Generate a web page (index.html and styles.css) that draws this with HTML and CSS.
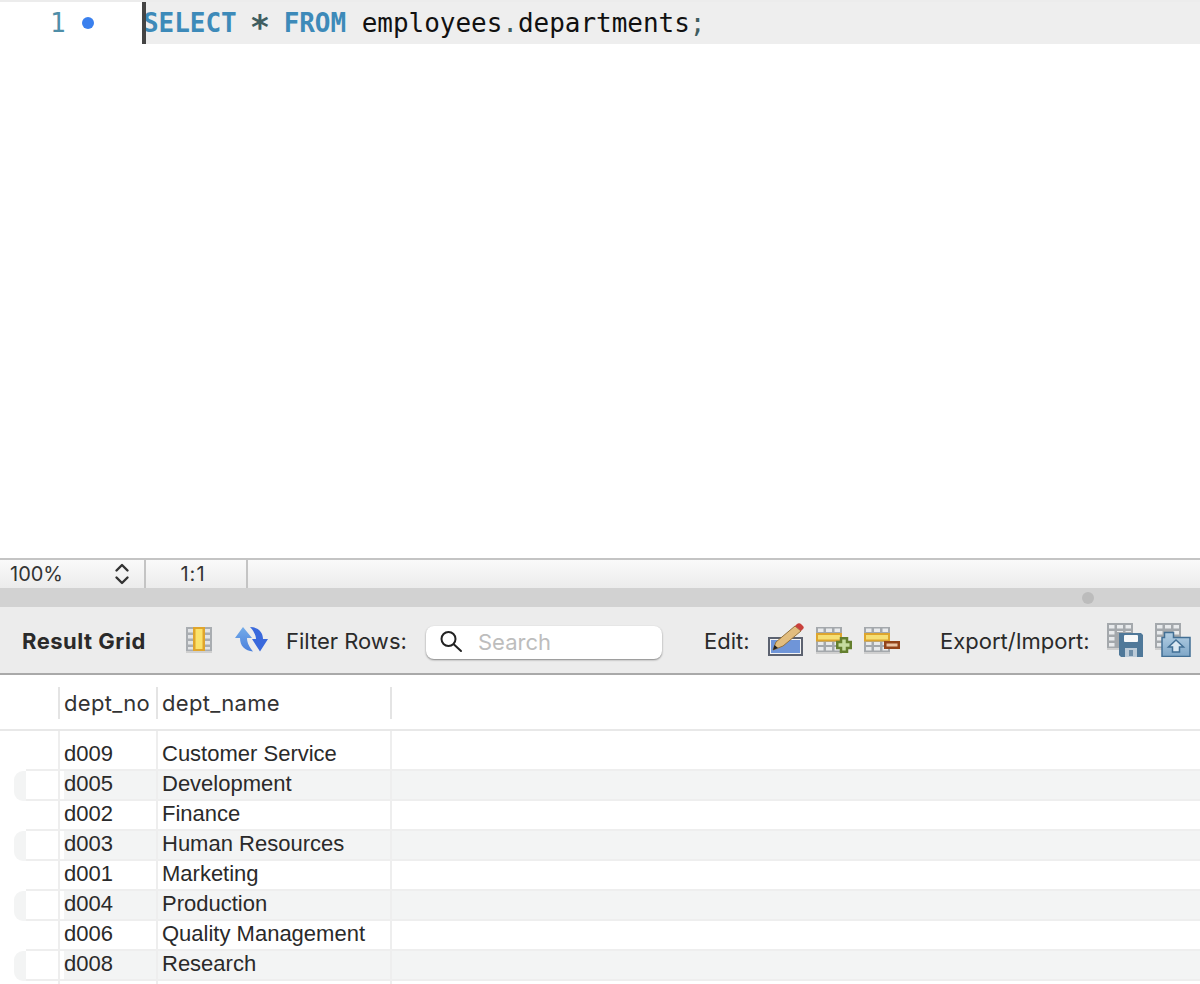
FILE: index.html
```html
<!DOCTYPE html>
<html lang="en">
<head>
    <meta charset="UTF-8">
    <title>Result Grid</title>
    <link rel="stylesheet" href="styles.css">
</head>
<body>
    <div class="editor">
        <div class="code-line">
            <div class="gutter">
                <span class="line-number">1</span>
                <span class="line-dot"></span>
            </div>
            <div class="active-line">
                <code class="code"><span class="kw">SELECT</span> <span class="op star">*</span> <span class="kw">FROM</span> employees<span class="op">.</span>departments<span class="op">;</span></code>
            </div>
        </div>
    </div>

    <div class="status-bar">
        <div class="zoom-cell">
            <span>100%</span>
            <svg class="stepper" width="16" height="24" viewBox="0 0 16 24" fill="none" stroke="#333" stroke-width="2.4" stroke-linecap="round" stroke-linejoin="round">
                <path d="M2.500 8.500 8 3l5.500 5.500"/>
                <path d="M2.500 15.500 8 21l5.500-5.500"/>
            </svg>
        </div>
        <div class="pos-cell">1:1</div>
    </div>

    <div class="splitter"><span class="splitter-dot"></span></div>

    <div class="toolbar">
        <span class="grid-title">Result Grid</span>

        <svg class="icon icon-columns" width="28" height="28" viewBox="0 0 28 28">
            <rect x="0" y="1" width="26" height="24" fill="#a9adb1"/>
            <path d="M2 3h5v3.500H2zM2 9h5v3.500H2zM2 15h5v3.500H2zM2 21h5v2.500H2zM19 3h5v3.500h-5zM19 9h5v3.500h-5zM19 15h5v3.500h-5zM19 21h5v2.500h-5z" fill="#e2e4e6"/>
            <rect x="7" y="1" width="12" height="24" fill="#e0a52c"/>
            <rect x="9.500" y="3" width="7" height="20" fill="#fbe26b"/>
            <rect x="0" y="25" width="26" height="2" fill="#cfcfcf"/>
        </svg>

        <svg class="icon icon-refresh" width="34" height="28" viewBox="0 0 34 28">
            <defs>
                <linearGradient id="arrowLight" x1="0" y1="0" x2="0" y2="1">
                    <stop offset="0" stop-color="#74ace9"/>
                    <stop offset="1" stop-color="#4a80dc"/>
                </linearGradient>
            </defs>
            <path d="M8 1 0 12h5c0 8 5 13 13 13.500-3-4-6-8-6-13.500h5z" fill="url(#arrowLight)"/>
            <path d="M25 25.500 33 13h-5c0-7-5-12-13-12 3 3 6 8 6 12h-4z" fill="#3a69dc"/>
        </svg>

        <span class="label label-filter">Filter Rows:</span>

        <div class="search-box">
            <svg width="24" height="24" viewBox="0 0 24 24" fill="none" stroke="#222" stroke-width="2" stroke-linecap="round">
                <circle cx="8.500" cy="9" r="7"/>
                <path d="m14 14.500 7 6.500"/>
            </svg>
            <span class="search-text">Search</span>
        </div>

        <span class="label label-edit">Edit:</span>

        <svg class="icon icon-edit" width="38" height="34" viewBox="0 0 38 34">
            <rect x="1" y="15" width="33" height="17" fill="#6f95d8" stroke="#5c6270" stroke-width="2"/>
            <rect x="2.500" y="16.500" width="30" height="14" fill="none" stroke="#f4f4f4"/>
            <path d="M5 27l3-8L27 3l6 5-18 15z" fill="#e2bd7e" stroke="#94733f"/>
            <path d="M5 27l1.500-5 3.500 3z" fill="#222"/>
            <path d="M27 3l2-2c1-1 3-1 4 0l2 2c1 1 1 2 0 3l-2 2z" fill="#c9403c"/>
        </svg>

        <svg class="icon icon-add" width="36" height="30" viewBox="0 0 36 30">
            <rect x="0" y="2" width="26" height="25" fill="#a4a8ac"/>
            <path d="M2 3.500h5.500V7H2zM10 3.500h6V7h-6zM18.500 3.500H24V7h-5.500zM2 17h5.500v3H2zM10 17h6v3h-6zM18.500 17H24v3h-5.500zM2 22h5.500v3.500H2zM10 22h6v3.500h-6zM18.500 22H24v3.500h-5.500z" fill="#e8eaec"/>
            <rect x="1" y="9" width="24" height="6.500" fill="#f6df74" stroke="#dda52e" stroke-width="2"/>
            <rect x="0" y="27" width="26" height="2" fill="#cfcfcf"/>
            <path d="M25 13.250h6V17h3.750v6H31v3.750h-6V23h-3.750v-6H25z" fill="#c5dc9e" stroke="#647f2e" stroke-width="2.500"/>
        </svg>

        <svg class="icon icon-del" width="36" height="30" viewBox="0 0 36 30">
            <rect x="0" y="2" width="26" height="25" fill="#a4a8ac"/>
            <path d="M2 3.500h5.500V7H2zM10 3.500h6V7h-6zM18.500 3.500H24V7h-5.500zM2 17h5.500v3H2zM10 17h6v3h-6zM18.500 17H24v3h-5.500zM2 22h5.500v3.500H2zM10 22h6v3.500h-6zM18.500 22H24v3.500h-5.500z" fill="#e8eaec"/>
            <rect x="1" y="9" width="24" height="6.500" fill="#f6df74" stroke="#dda52e" stroke-width="2"/>
            <rect x="0" y="27" width="26" height="2" fill="#cfcfcf"/>
            <rect x="21.250" y="17.250" width="13.500" height="5.500" fill="#eac4a4" stroke="#93431a" stroke-width="2.500"/>
        </svg>

        <span class="label label-export">Export/Import:</span>

        <svg class="icon icon-export" width="36" height="34" viewBox="0 0 36 34">
            <rect x="0" y="0" width="26" height="25" fill="#a4a8ac"/>
            <path d="M2 2h5.500v3.500H2zM10 2h6v3.500h-6zM18.500 2H24v3.500h-5.500zM2 8h5.500v3.500H2zM10 8h6v1h-6zM18.500 8H24v1h-5.500zM2 14h5.500v3.500H2zM2 20h5.500v3.500H2z" fill="#e8eaec"/>
            <rect x="0" y="25" width="12" height="2" fill="#cfcfcf"/>
            <path d="M12 10h22l2 2v22H14l-2-2z" fill="#4f7899"/>
            <rect x="17" y="12" width="14" height="7" rx="1" fill="#f7f8f9"/>
            <rect x="18" y="25" width="12" height="9" fill="#bccbd8"/>
            <rect x="22" y="27" width="4" height="6" fill="#6f8ea8"/>
        </svg>

        <svg class="icon icon-import" width="36" height="34" viewBox="0 0 36 34">
            <defs>
                <linearGradient id="folderFill" x1="0" y1="0" x2="0" y2="1">
                    <stop offset="0" stop-color="#b4cfe4"/>
                    <stop offset="1" stop-color="#7ea6c7"/>
                </linearGradient>
            </defs>
            <rect x="0" y="0" width="26" height="25" fill="#a4a8ac"/>
            <path d="M2 2h5.500v3.500H2zM10 2h6v3.500h-6zM18.500 2H24v3.500h-5.500zM2 8h5.500v3.500H2zM18.500 8H24v3.500h-5.500zM2 14h5.500v3.500H2zM2 20h5v3.500H2z" fill="#e8eaec"/>
            <rect x="0" y="25" width="7" height="2" fill="#cfcfcf"/>
            <path d="M9.500 14.500v-5h9v5h16.500v19h-28v-19z" fill="url(#folderFill)" stroke="#426f95" stroke-width="1.500"/>
            <path d="M21 17l7.500 7h-4v5h-7v-5h-4z" fill="#dbe8f2" stroke="#426f95" stroke-width="1.500"/>
        </svg>
    </div>

    <div class="grid">
        <div class="grid-head">
            <div class="head-cell head-no">dept_no</div>
            <div class="head-cell head-name">dept_name</div>
        </div>
        <div class="grid-body">
            <div class="row first">
                <span class="row-cap"></span><span class="row-pad"></span>
                <span class="cell cell-no">d009</span><span class="cell cell-name">Customer Service</span><span class="cell cell-rest"></span>
            </div>
            <div class="row alt">
                <span class="row-cap"></span><span class="row-pad"></span>
                <span class="cell cell-no">d005</span><span class="cell cell-name">Development</span><span class="cell cell-rest"></span>
            </div>
            <div class="row">
                <span class="row-cap"></span><span class="row-pad"></span>
                <span class="cell cell-no">d002</span><span class="cell cell-name">Finance</span><span class="cell cell-rest"></span>
            </div>
            <div class="row alt">
                <span class="row-cap"></span><span class="row-pad"></span>
                <span class="cell cell-no">d003</span><span class="cell cell-name">Human Resources</span><span class="cell cell-rest"></span>
            </div>
            <div class="row">
                <span class="row-cap"></span><span class="row-pad"></span>
                <span class="cell cell-no">d001</span><span class="cell cell-name">Marketing</span><span class="cell cell-rest"></span>
            </div>
            <div class="row alt">
                <span class="row-cap"></span><span class="row-pad"></span>
                <span class="cell cell-no">d004</span><span class="cell cell-name">Production</span><span class="cell cell-rest"></span>
            </div>
            <div class="row">
                <span class="row-cap"></span><span class="row-pad"></span>
                <span class="cell cell-no">d006</span><span class="cell cell-name">Quality Management</span><span class="cell cell-rest"></span>
            </div>
            <div class="row alt">
                <span class="row-cap"></span><span class="row-pad"></span>
                <span class="cell cell-no">d008</span><span class="cell cell-name">Research</span><span class="cell cell-rest"></span>
            </div>
            <div class="row">
                <span class="row-cap"></span><span class="row-pad"></span>
                <span class="cell cell-no"></span><span class="cell cell-name"></span><span class="cell cell-rest"></span>
            </div>
        </div>
    </div>
</body>
</html>
```

FILE: styles.css
```css
html, body {
    height: 984px;
    overflow: hidden;
}
body {
    margin: 0;
    background-color: white;
    font-family: 'Inter', 'Liberation Sans', sans-serif;
    color: #222;
}

/* query editor */
.editor {
    height: 556px;
    border-top: 2px solid #ececec;
}
.code-line {
    display: flex;
    height: 42px;
}
.gutter {
    width: 142px;
    display: flex;
    align-items: center;
    flex-shrink: 0;
}
.line-number {
    font-family: 'DejaVu Sans Mono', monospace;
    font-size: 26px;
    color: #4f8ea8;
    margin-left: 50px;
}
.line-dot {
    width: 12px;
    height: 12px;
    border-radius: 50%;
    background-color: #3a80ee;
    margin-left: 16px;
}
.active-line {
    flex: 1;
    position: relative;
    background-color: #eeeeee;
    line-height: 42px;
}
.active-line::before {
    content: '';
    position: absolute;
    top: 0;
    left: 0;
    width: 4px;
    height: 42px;
    background-color: #444;
}
.code {
    font-family: 'DejaVu Sans Mono', monospace;
    font-size: 26px;
    letter-spacing: -0.03px;
    color: #111;
    margin-left: 1px;
}
.kw {
    color: #3d8ab9;
    font-weight: bold;
}
.op {
    color: #3f5d5f;
}
.star {
    display: inline-block;
    font-weight: bold;
    transform: translateY(4px) scale(1.3);
}

/* zoom / caret position strip */
.status-bar {
    display: flex;
    height: 28px;
    border-top: 2px solid #c4c4c4;
    background: linear-gradient(#fafafa, #ececec);
    font-size: 20px;
    line-height: 28px;
    color: #333;
}
.zoom-cell {
    width: 134px;
    padding-left: 10px;
    display: flex;
    justify-content: space-between;
    align-items: center;
    border-right: 2px solid #c4c4c4;
}
.stepper {
    margin-right: 14px;
}
.pos-cell {
    width: 94px;
    padding-right: 6px;
    letter-spacing: 1px;
    text-align: center;
    border-right: 2px solid #c4c4c4;
}

.splitter {
    height: 19px;
    background-color: #d2d2d2;
    display: flex;
    align-items: center;
    justify-content: flex-end;
    padding-right: 106px;
}
.splitter-dot {
    width: 12px;
    height: 12px;
    border-radius: 50%;
    background-color: #bcbcbc;
}

/* result toolbar */
.toolbar {
    height: 66px;
    background-color: #ececec;
    border-bottom: 2px solid #a9a9a9;
    display: flex;
    align-items: center;
    font-size: 22px;
}
.grid-title {
    font-weight: bold;
    letter-spacing: 0.5px;
    margin-left: 22px;
    padding-top: 2px;
    color: #2a2a2a;
    width: 164px;
    flex-shrink: 0;
}
.icon {
    flex-shrink: 0;
}
.icon-refresh {
    margin-left: 21px;
}
.label {
    color: #2a2a2a;
    flex-shrink: 0;
    padding-top: 2px;
}
.label-filter {
    margin-left: 17px;
    width: 140px;
}
.search-box {
    width: 236px;
    height: 33px;
    box-sizing: border-box;
    margin-top: 4px;
    display: flex;
    align-items: center;
    gap: 14px;
    padding-left: 14px;
    background-color: white;
    border-radius: 8px;
    box-shadow: 0 1px 2px rgba(0, 0, 0, 0.45);
    flex-shrink: 0;
}
.search-text {
    color: #bdbdbd;
}
.label-edit {
    margin-left: 42px;
    width: 64px;
}
.icon-add {
    margin-left: 10px;
}
.icon-del {
    margin-left: 12px;
}
.label-export {
    margin-left: 40px;
    width: 167px;
}
.icon-import {
    margin-left: 12px;
}

/* result grid */
.grid {
    font-size: 22px;
}
.grid-head {
    display: flex;
    height: 52px;
    padding-top: 2px;
    border-bottom: 2px solid #e8e8e8;
    align-items: center;
    letter-spacing: 0.3px;
    color: #333;
    padding-left: 58px;
}
.head-cell {
    height: 32px;
    line-height: 32px;
    padding-left: 4px;
    border-left: 2px solid #e4e4e4;
    box-sizing: border-box;
}
.head-no {
    width: 98px;
}
.head-name {
    width: 236px;
    border-right: 2px solid #e4e4e4;
}
.grid-body {
    display: flex;
    flex-direction: column;
}
.row {
    display: flex;
    height: 30px;
    font-family: 'Liberation Sans', sans-serif;
    line-height: 26px;
    color: #2a2a2a;
}
.row.first {
    height: 40px;
    line-height: 28px;
}
.row-cap {
    width: 26px;
    flex-shrink: 0;
    position: relative;
}
.row-pad {
    width: 32px;
    flex-shrink: 0;
    box-sizing: border-box;
    border-bottom: 2px solid #eeeeee;
}
.cell {
    border-left: 2px solid #eeeeee;
    border-bottom: 2px solid #eeeeee;
    box-sizing: border-box;
    flex-shrink: 0;
}
.row.first .cell {
    padding-top: 9px;
}
.cell-no {
    width: 98px;
    padding-left: 4px;
}
.cell-name {
    width: 234px;
    padding-left: 4px;
}
.cell-rest {
    flex: 1;
}
.alt .cell {
    background-color: #f3f4f4;
}
.alt .cell-no {
    background: linear-gradient(to right, white 4px, #f3f4f4 4px);
}
.alt .row-cap::before {
    content: '';
    position: absolute;
    top: 0;
    left: 14px;
    width: 12px;
    height: 30px;
    border-radius: 9px 0 0 9px;
    background-color: #f3f4f4;
}
```
